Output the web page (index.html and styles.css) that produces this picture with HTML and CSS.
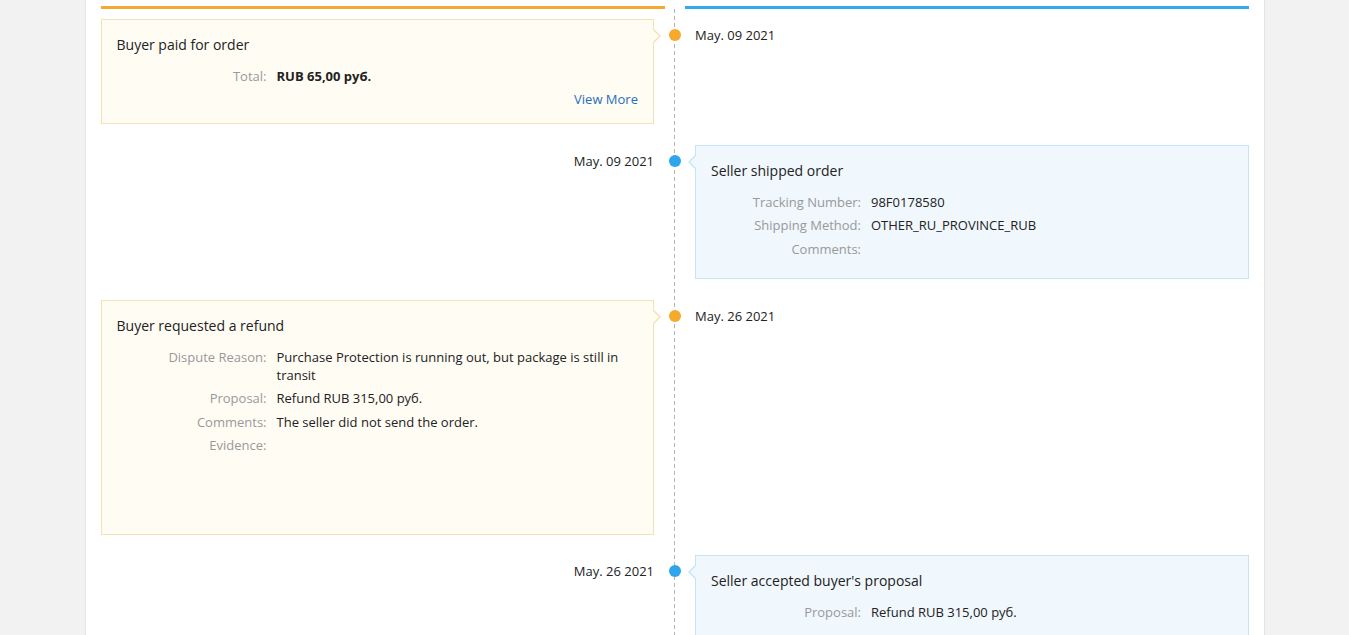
FILE: index.html
```html
<!DOCTYPE html>
<html>
<head>
  <title>Dispute History</title>
  <link rel="stylesheet" href="styles.css">
</head>
<body>
  <div class="page">
    <div class="heads">
      <div class="head head-buyer"></div>
      <div class="head head-seller"></div>
    </div>

    <div class="timeline">
      <!-- buyer events sit on the left, seller events on the right -->
      <div class="event">
        <div class="side side-left">
          <div class="card card-buyer">
            <div class="card-title">Buyer paid for order</div>
            <div class="row">
              <div class="label">Total:</div>
              <div class="value value-strong">RUB 65,00 руб.</div>
            </div>
            <div class="more"><a href="#">View More</a></div>
          </div>
        </div>
        <div class="axis"><span class="dot dot-buyer"></span></div>
        <div class="side side-right"><span class="date">May. 09 2021</span></div>
      </div>

      <div class="event">
        <div class="side side-left"><span class="date date-left">May. 09 2021</span></div>
        <div class="axis"><span class="dot dot-seller"></span></div>
        <div class="side side-right">
          <div class="card card-seller">
            <div class="card-title">Seller shipped order</div>
            <div class="row">
              <div class="label">Tracking Number:</div>
              <div class="value">98F0178580</div>
            </div>
            <div class="row">
              <div class="label">Shipping Method:</div>
              <div class="value">OTHER_RU_PROVINCE_RUB</div>
            </div>
            <div class="row">
              <div class="label">Comments:</div>
              <div class="value"></div>
            </div>
          </div>
        </div>
      </div>

      <div class="event">
        <div class="side side-left">
          <div class="card card-buyer">
            <div class="card-title">Buyer requested a refund</div>
            <div class="row">
              <div class="label">Dispute Reason:</div>
              <div class="value value-wrap">Purchase Protection is running out, but package is still in transit</div>
            </div>
            <div class="row">
              <div class="label">Proposal:</div>
              <div class="value">Refund RUB 315,00 руб.</div>
            </div>
            <div class="row">
              <div class="label">Comments:</div>
              <div class="value">The seller did not send the order.</div>
            </div>
            <div class="row">
              <div class="label">Evidence:</div>
              <div class="value evidence"></div>
            </div>
          </div>
        </div>
        <div class="axis"><span class="dot dot-buyer"></span></div>
        <div class="side side-right"><span class="date">May. 26 2021</span></div>
      </div>

      <div class="event">
        <div class="side side-left"><span class="date date-left">May. 26 2021</span></div>
        <div class="axis"><span class="dot dot-seller"></span></div>
        <div class="side side-right">
          <div class="card card-seller">
            <div class="card-title">Seller accepted buyer's proposal</div>
            <div class="row">
              <div class="label">Proposal:</div>
              <div class="value">Refund RUB 315,00 руб.</div>
            </div>
          </div>
        </div>
      </div>
    </div>
  </div>
</body>
</html>
```

FILE: styles.css
```css
/* Dispute timeline */
body {
  margin: 0;
  background-color: #f2f2f2;
  font-family: "Open Sans", "Liberation Sans", sans-serif;
  color: #222;
  font-size: 13px;
}

.page {
  width: 1148px;
  margin: 0 auto;
  padding: 6px 15px 40px;
  background-color: #fff;
  border-left: 1px solid #e4e4e4;
  border-right: 1px solid #e4e4e4;
  min-height: 700px;
}

.heads {
  display: flex;
  gap: 20px;
}

.head {
  flex: 1;
  height: 3px;
}

.head-buyer {
  background-color: #f5a833;
}

.head-seller {
  background-color: #33a8ea;
}

.timeline {
  position: relative;
  padding-top: 10px;
  display: flex;
  flex-direction: column;
  gap: 20.5px;
}

/* dashed axis down the middle */
.timeline::before {
  content: "";
  position: absolute;
  top: 0;
  bottom: -60px;
  left: 573px;
  width: 1px;
  background: repeating-linear-gradient(to bottom, #b5b5b5 0, #b5b5b5 4px, transparent 4px, transparent 7px);
}

.event {
  display: grid;
  grid-template-columns: 1fr 41px 1fr;
}

.axis {
  position: relative;
  display: flex;
  justify-content: center;
}

.dot {
  position: relative;
  margin-top: 10px;
  width: 12px;
  height: 12px;
  border-radius: 50%;
}

.dot-buyer {
  background-color: #f7a92c;
}

.dot-seller {
  background-color: #2ea6ee;
}

.date {
  display: block;
  margin-top: 7px;
  line-height: 18px;
  color: #222;
}

.date-left {
  text-align: right;
}

.card {
  position: relative;
  padding: 15px;
  border: 1px solid;
}

.card-buyer {
  background-color: #fffcf4;
  border-color: #f5e2b2;
}

.card-seller {
  background-color: #f0f7fd;
  border-color: #c7e4f6;
}

/* little pointers toward the axis */
.card::before,
.card::after {
  content: "";
  position: absolute;
  top: 8px;
  border: 8px solid transparent;
}

.card-buyer::before {
  right: -16px;
  border-left-color: #f5e2b2;
}

.card-buyer::after {
  right: -14px;
  border-left-color: #fffcf4;
}

.card-seller::before {
  left: -16px;
  border-right-color: #c7e4f6;
}

.card-seller::after {
  left: -14px;
  border-right-color: #f0f7fd;
}

.card-title {
  font-size: 14px;
  line-height: 20px;
  margin-bottom: 12px;
}

.row {
  display: flex;
  line-height: 19px;
  margin-bottom: 4.5px;
}

.label {
  width: 150px;
  flex-shrink: 0;
  text-align: right;
  color: #999;
  padding-right: 10px;
}

.value {
  flex: 1;
}

.value-wrap {
  line-height: 18.5px;
}

.value-strong {
  font-weight: bold;
}

.evidence {
  min-height: 78px;
}

.more {
  text-align: right;
  line-height: 17.5px;
}

.more a {
  color: #1f6fbf;
  text-decoration: none;
}
```
